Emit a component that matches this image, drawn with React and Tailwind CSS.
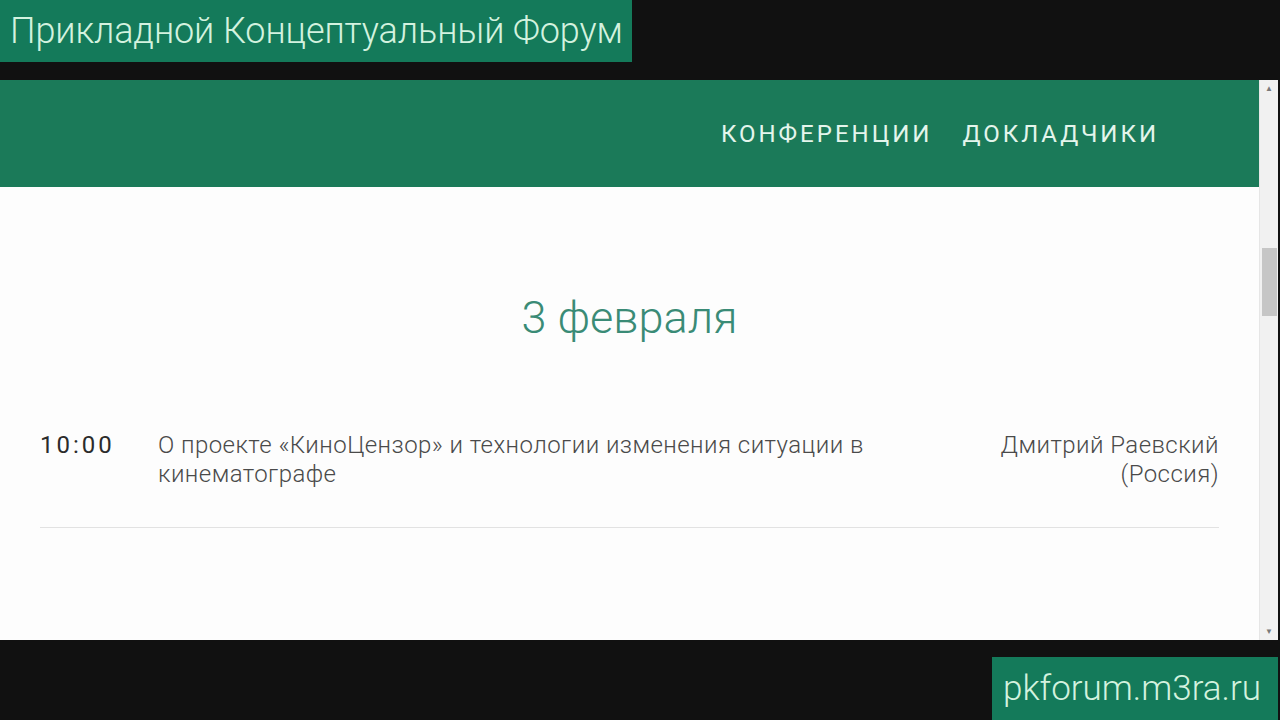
import React from 'react';

const font = { fontFamily: 'Roboto, "Noto Sans", sans-serif' };

function Scrollbar() {
  return (
    <div className="w-[19px] bg-[#f1f1f1] flex flex-col items-center justify-between border-l border-[#e6e6e6]">
      <div className="pt-[5px] text-[#7a7a7a] text-[8px] leading-none">▲</div>
      <div className="flex-1 w-full pt-[155px]">
        <div className="mx-auto w-[15px] h-[68px] bg-[#c6c6c6]" />
      </div>
      <div className="pb-[4px] text-[#7a7a7a] text-[8px] leading-none">▼</div>
    </div>
  );
}

export default function App() {
  return (
    <div className="w-[1280px] h-[720px] bg-[#111111] flex flex-col overflow-hidden" style={font}>
      {/* Channel title */}
      <div className="h-[62px] w-[632px] bg-[#147a5a] flex items-center pl-[10px]">
        <span className="text-[36px] font-light text-[#d3f2df] leading-none tracking-[-0.1px]">
          Прикладной Концептуальный Форум
        </span>
      </div>

      {/* Browser window */}
      <div className="mt-[18px] h-[560px] w-[1278px] flex bg-white">
        <div className="flex-1 flex flex-col">
          <nav className="h-[107px] bg-[#1b7a59] flex items-center justify-end pr-[100px] gap-[30px]">
            <span className="text-[24px] font-normal text-[#e4f5ec] tracking-[3px]">КОНФЕРЕНЦИИ</span>
            <span className="text-[24px] font-normal text-[#e4f5ec] tracking-[3px]">ДОКЛАДЧИКИ</span>
          </nav>

          <div className="flex-1 bg-[#fdfdfd] px-[40px]">
            <h2 className="pt-[108px] text-center text-[45px] font-light text-[#3a8b76] leading-none">
              3 февраля
            </h2>

            <div className="mt-[91px] flex items-start pb-[38px] border-b border-[#e2e2e2]">
              <div className="w-[118px] text-[24px] text-[#2b2b2b] tracking-[3px] leading-[29px]">10:00</div>
              <div className="flex-1 text-[24px] font-light text-[#4a4a4a] leading-[29px] tracking-[0.45px] pr-[60px]">
                О проекте «КиноЦензор» и технологии изменения ситуации в кинематографе
              </div>
              <div className="text-right text-[24px] font-light text-[#4a4a4a] leading-[29px] tracking-[0.45px]">
                Дмитрий Раевский
                <br />
                (Россия)
              </div>
            </div>
          </div>
        </div>
        <Scrollbar />
      </div>

      {/* Site address */}
      <div className="mt-[17px] self-end mr-[2px] h-[63px] w-[286px] bg-[#147a5a] flex items-center pl-[11px]">
        <span className="text-[35px] font-light text-[#d3f2df] leading-none">pkforum.m3ra.ru</span>
      </div>
    </div>
  );
}
